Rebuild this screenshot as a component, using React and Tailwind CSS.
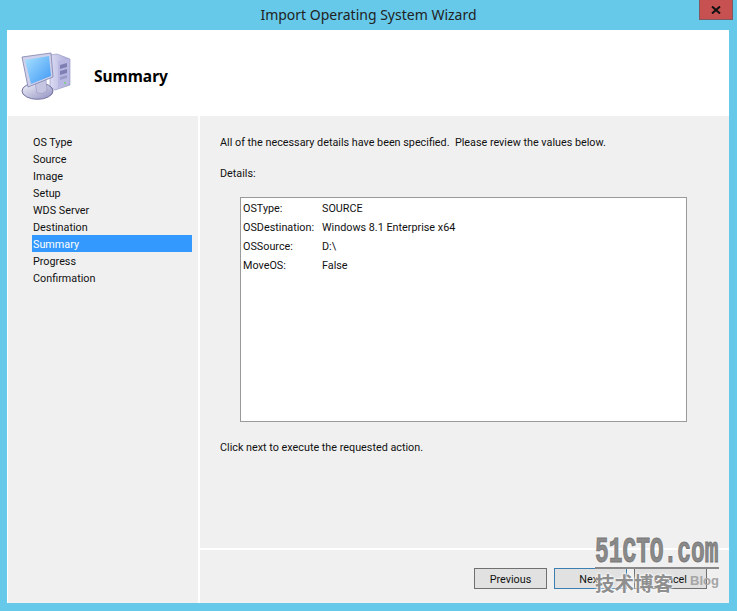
const steps = ["OS Type", "Source", "Image", "Setup", "WDS Server", "Destination", "Summary", "Progress", "Confirmation"];

const details = [
  ["OSType:", "SOURCE"],
  ["OSDestination:", "Windows 8.1 Enterprise x64"],
  ["OSSource:", "D:\\"],
  ["MoveOS:", "False"],
];

function ComputerIcon() {
  return (
    <svg width="50" height="50" viewBox="0 0 50 50" className="block">
      <defs>
        <linearGradient id="screen" x1="0" y1="0" x2="1" y2="1">
          <stop offset="0" stopColor="#a8e2ff" />
          <stop offset="1" stopColor="#3f97f5" />
        </linearGradient>
        <linearGradient id="tower" x1="0" y1="0" x2="1" y2="0">
          <stop offset="0" stopColor="#dcdcf4" />
          <stop offset="1" stopColor="#a8a8d8" />
        </linearGradient>
        <linearGradient id="base" x1="0" y1="0" x2="1" y2="1">
          <stop offset="0" stopColor="#f5f5fc" />
          <stop offset="1" stopColor="#8f8fc0" />
        </linearGradient>
      </defs>
      <path d="M29 5 L36 4 L49 9 L49 35 L34 40 L29 37 Z" fill="url(#tower)" stroke="#8d8dbd" strokeWidth="0.6" />
      <path d="M37 11 L48.5 9 L48.5 34 L37 38 Z" fill="#b8b8e2" />
      <path d="M39 15 L46 13 L46 17 L39 19 Z" fill="#7f7fb4" />
      <path d="M39 21 L46 19 L46 23 L39 25 Z" fill="#7f7fb4" />
      <path d="M39 27 L46 25 L46 28 L39 30 Z" fill="#9a9ac9" />
      <circle cx="44" cy="33" r="1" fill="#6fd66f" />
      <ellipse cx="16.5" cy="41" rx="15.5" ry="8.3" fill="url(#base)" stroke="#6f6f9f" strokeWidth="1" />
      <path d="M14 33 L25 29 L26 41 Q21 45 16 43 Z" fill="#c5c5e2" stroke="#8d8dbd" strokeWidth="0.5" />
      <path d="M1 7 L30 3 L32 27 L7 37 Z" fill="#cfd1ea" stroke="#7f81ad" strokeWidth="0.8" />
      <path d="M4 10 L28 6 L30 26 L10 34 Z" fill="url(#screen)" />
    </svg>
  );
}

export default function App() {
  return (
    <div className="w-[737px] h-[611px] bg-[#66c9ea] flex flex-col overflow-hidden relative font-['Roboto','Liberation_Sans',sans-serif] text-[10.8px] leading-[17px] text-[#111]">
      {/* title bar */}
      <div className="h-[30px] flex items-start relative">
        <div className="flex-1 text-center text-[14px] leading-[30px] text-[#222] font-['Noto_Sans',sans-serif]">Import Operating System Wizard</div>
        <div className="absolute right-[4px] top-0 w-[34px] h-[20px] bg-[#c75050] border border-t-0 border-[#7d5a62] flex items-center justify-center">
          <svg width="10" height="8" viewBox="0 0 10 8">
            <path d="M1 0.5 L9 7.5 M9 0.5 L1 7.5" stroke="#111" strokeWidth="2" fill="none" />
          </svg>
        </div>
      </div>

      <div className="flex-1 ml-[7px] mr-[8px] mb-[8px] bg-white flex flex-col">
        {/* header */}
        <div className="h-[86px] flex items-start shrink-0">
          <div className="ml-[14px] mt-[20px]">
            <ComputerIcon />
          </div>
          <div className="ml-[23px] mt-[36px] text-[15.5px] leading-[20px] font-bold text-black font-['Noto_Sans',sans-serif]">Summary</div>
        </div>

        <div className="flex-1 flex gap-[2px] pl-[1px]">
          {/* step list */}
          <div className="w-[190px] bg-[#f0f0f0] pt-[17px] pl-[24px] pr-[6px]">
            {steps.map((s) => (
              <div
                key={s}
                className={s === "Summary" ? "h-[17px] pl-[1px] leading-[19px] bg-[#3399ff] text-white" : "h-[17px] pl-[1px] leading-[19px]"}
              >
                {s}
              </div>
            ))}
          </div>

          {/* main panel */}
          <div className="flex-1 flex flex-col">
            <div className="h-[432px] bg-[#f0f0f0] pt-[18px] pl-[20px] pr-[42px] shrink-0">
              <div>All of the necessary details have been specified.&nbsp; Please review the values below.</div>
              <div className="mt-[14px]">Details:</div>
              <div className="mt-[15px] ml-[20px] h-[225px] bg-white border border-[#9a9a9a] pt-[1px] pl-[2px]">
                {details.map(([k, v]) => (
                  <div key={k} className="flex h-[19px] items-center">
                    <div className="w-[79px]">{k}</div>
                    <div>{v}</div>
                  </div>
                ))}
              </div>
              <div className="mt-[17px]">Click next to execute the requested action.</div>
            </div>
            <div className="h-[2px] shrink-0" />
            <div className="flex-1 bg-[#f0f0f0] flex justify-end items-start pt-[18px] pr-[22px] gap-[7px]">
              <button className="w-[73px] h-[21px] pt-[1px] bg-[#e1e1e1] border border-[#707070] text-center leading-[19px]">Previous</button>
              <button className="w-[73px] h-[21px] pt-[1px] bg-[#e1e1e1] border border-[#3c7fb1] text-center leading-[19px]">Next</button>
              <button className="w-[73px] h-[21px] pt-[1px] bg-[#e1e1e1] border border-[#707070] text-center leading-[19px]">Cancel</button>
            </div>
          </div>
        </div>
      </div>

      {/* watermark */}
      <div className="absolute left-[595px] top-[537px] w-[124px] pointer-events-none">
        <div className="h-[30px] text-[36px] leading-[32px] font-bold text-[#8a8a8a] font-['Liberation_Mono',monospace] whitespace-nowrap origin-top-left scale-x-[0.635] [-webkit-text-stroke:1px_#777] [text-shadow:0_0_3px_#fff]">51CTO.com</div>
        <div className="h-[2px] bg-[#888]" />
        <div className="flex items-center justify-between mt-[2px]">
          <span className="text-[19.5px] leading-[24px] font-bold text-[#8f8f8f] font-['Noto_Sans_CJK_SC',sans-serif] [text-shadow:0_0_3px_#fff,0_0_3px_#fff]">技术博客</span>
          <span className="text-[13px] leading-[20px] mt-[-4px] text-[#a5a5a5] font-bold font-['Liberation_Sans',sans-serif]">Blog</span>
        </div>
      </div>
    </div>
  );
}
